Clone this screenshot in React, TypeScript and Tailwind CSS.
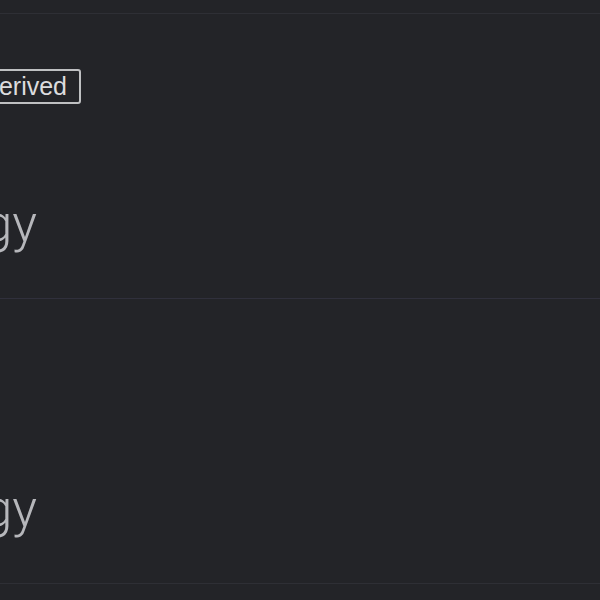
const rows = [
  { id: 'a', badge: 'Derived', title: 'Technology', divider: 'border-[#30303c]' },
  { id: 'b', badge: null, title: 'Technology', divider: 'border-[#2e2f35]' }
]

export default function App() {
  return (
    <div className="h-[600px] w-[600px] overflow-hidden bg-[#232428] pt-[13px]">
      <div className="border-t border-[#2e2f35]">
        {rows.map(row => (
          <div key={row.id} className={`h-[285px] border-b pt-[55px] ${row.divider}`}>
            {/* badge, clipped on the left */}
            <div className="flex h-[35px] w-[300px] ml-[-219px] justify-end">
              {row.badge && (
                <span className="flex h-[35px] items-center rounded-[3px] border-2 border-[#bfc0c2] px-[12px] font-['Liberation_Sans',Arial,sans-serif] text-[25px] leading-none text-[#dcdcde]">
                  {row.badge}
                </span>
              )}
            </div>

            {/* title */}
            <div className="mt-[94px] w-[400px] ml-[-363px] text-right font-['Roboto','Noto_Sans',sans-serif] text-[52px] font-light leading-none text-[#b6b7bb]">
              {row.title}
            </div>
          </div>
        ))}
      </div>
    </div>
  )
}
